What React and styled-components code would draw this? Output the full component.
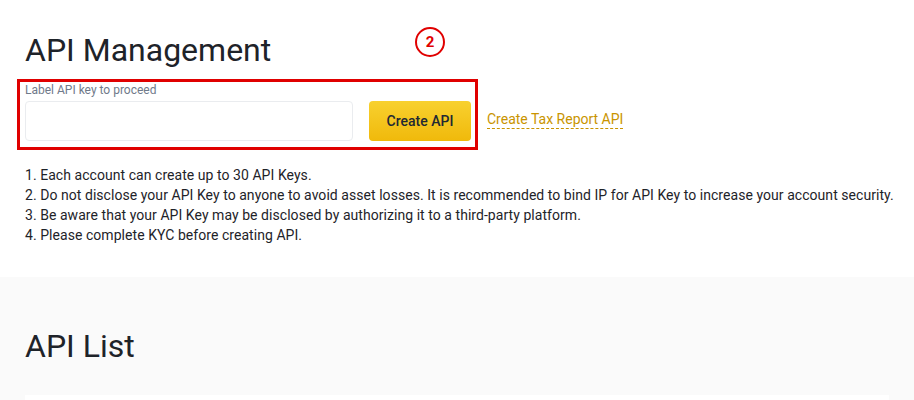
import React from "react";
import styled, { createGlobalStyle } from "styled-components";

const GlobalStyle = createGlobalStyle`
  html, body {
    margin: 0;
    padding: 0;
    background: #ffffff;
    font-family: Roboto, "Noto Sans", Arial, sans-serif;
    color: #1e2329;
  }
`;

export const Page = styled.div`
  width: 914px;
  height: 400px;
  overflow: hidden;
`;

// Top section ---------------------

export const TopSection = styled.section`
  padding: 28px 25px 0 25px;
  height: 277px;
  box-sizing: border-box;
  position: relative;
`;

export const Title = styled.h1`
  margin: 0;
  font-size: 32px;
  font-weight: 400;
  line-height: 44px;
  color: #1e2329;
`;

export const FormArea = styled.div`
  position: relative;
  margin-top: 8px;
`;

export const FieldLabel = styled.div`
  font-size: 12px;
  line-height: 16px;
  color: #707a8a;
  padding-top: 2px;
  margin-bottom: 3px;
`;

export const FieldRow = styled.div`
  display: flex;
  align-items: center;
  gap: 16px;
`;

export const Input = styled.input`
  flex: 0 0 328px;
  width: 328px;
  height: 40px;
  box-sizing: border-box;
  border: 1px solid #eaecef;
  border-radius: 4px;
  outline: none;
  padding: 0 12px;
  font-size: 14px;
  background: #fff;
`;

export const PrimaryButton = styled.button`
  flex: 0 0 102px;
  height: 40px;
  border: none;
  border-radius: 4px;
  background-image: linear-gradient(180deg, #f8d12f 0%, #f0b90b 100%);
  color: #212833;
  font-family: inherit;
  font-size: 14px;
  font-weight: 500;
  white-space: nowrap;
  cursor: pointer;
`;

export const TaxLink = styled.a`
  margin: -3px 0 0 0;
  font-size: 14px;
  color: #c99400;
  text-decoration: none;
  border-bottom: 1px dashed #c99400;
  line-height: 18px;
  white-space: nowrap;
`;

// Annotation overlay (red box + step badge)
export const Highlight = styled.div`
  position: absolute;
  left: -8px;
  top: -1px;
  width: 461px;
  height: 71px;
  border: 3px solid #e00000;
  box-sizing: border-box;
  pointer-events: none;
`;

export const StepBadge = styled.div`
  position: absolute;
  left: 415px;
  top: 27px;
  width: 30px;
  height: 30px;
  border: 2.5px solid #e00000;
  border-radius: 50%;
  box-sizing: border-box;
  display: flex;
  align-items: center;
  justify-content: center;
  color: #e00000;
  font-size: 15px;
  font-weight: 700;
`;

export const Notes = styled.ol`
  list-style: none;
  margin: 24px 0 0 0;
  padding: 0;
`;

export const Note = styled.li`
  font-size: 14px;
  line-height: 20px;
  letter-spacing: 0.05px;
  color: #1e2329;
  white-space: nowrap;
`;

// API list section ---------------------

export const ListSection = styled.section`
  background: #fafafa;
  height: 123px;
  padding: 47px 25px 0 25px;
  box-sizing: border-box;
`;

export const ListTitle = styled.h2`
  margin: 0;
  font-size: 32px;
  font-weight: 400;
  line-height: 44px;
  color: #1e2329;
`;

export const ListCard = styled.div`
  margin-top: 27px;
  height: 20px;
  background: #ffffff;
`;

const notes = [
  "1. Each account can create up to 30 API Keys.",
  "2. Do not disclose your API Key to anyone to avoid asset losses. It is recommended to bind IP for API Key to increase your account security.",
  "3. Be aware that your API Key may be disclosed by authorizing it to a third-party platform.",
  "4. Please complete KYC before creating API.",
];

export default function App() {
  return (
    <Page>
      <GlobalStyle />
      <TopSection>
        <Title>API Management</Title>
        <StepBadge>2</StepBadge>
        <FormArea>
          <FieldLabel>Label API key to proceed</FieldLabel>
          <FieldRow>
            <Input />
            <PrimaryButton>Create API</PrimaryButton>
            <TaxLink href="#">Create Tax Report API</TaxLink>
          </FieldRow>
          <Highlight />
        </FormArea>
        <Notes>
          {notes.map((n) => (
            <Note key={n}>{n}</Note>
          ))}
        </Notes>
      </TopSection>
      <ListSection>
        <ListTitle>API List</ListTitle>
        <ListCard />
      </ListSection>
    </Page>
  );
}
